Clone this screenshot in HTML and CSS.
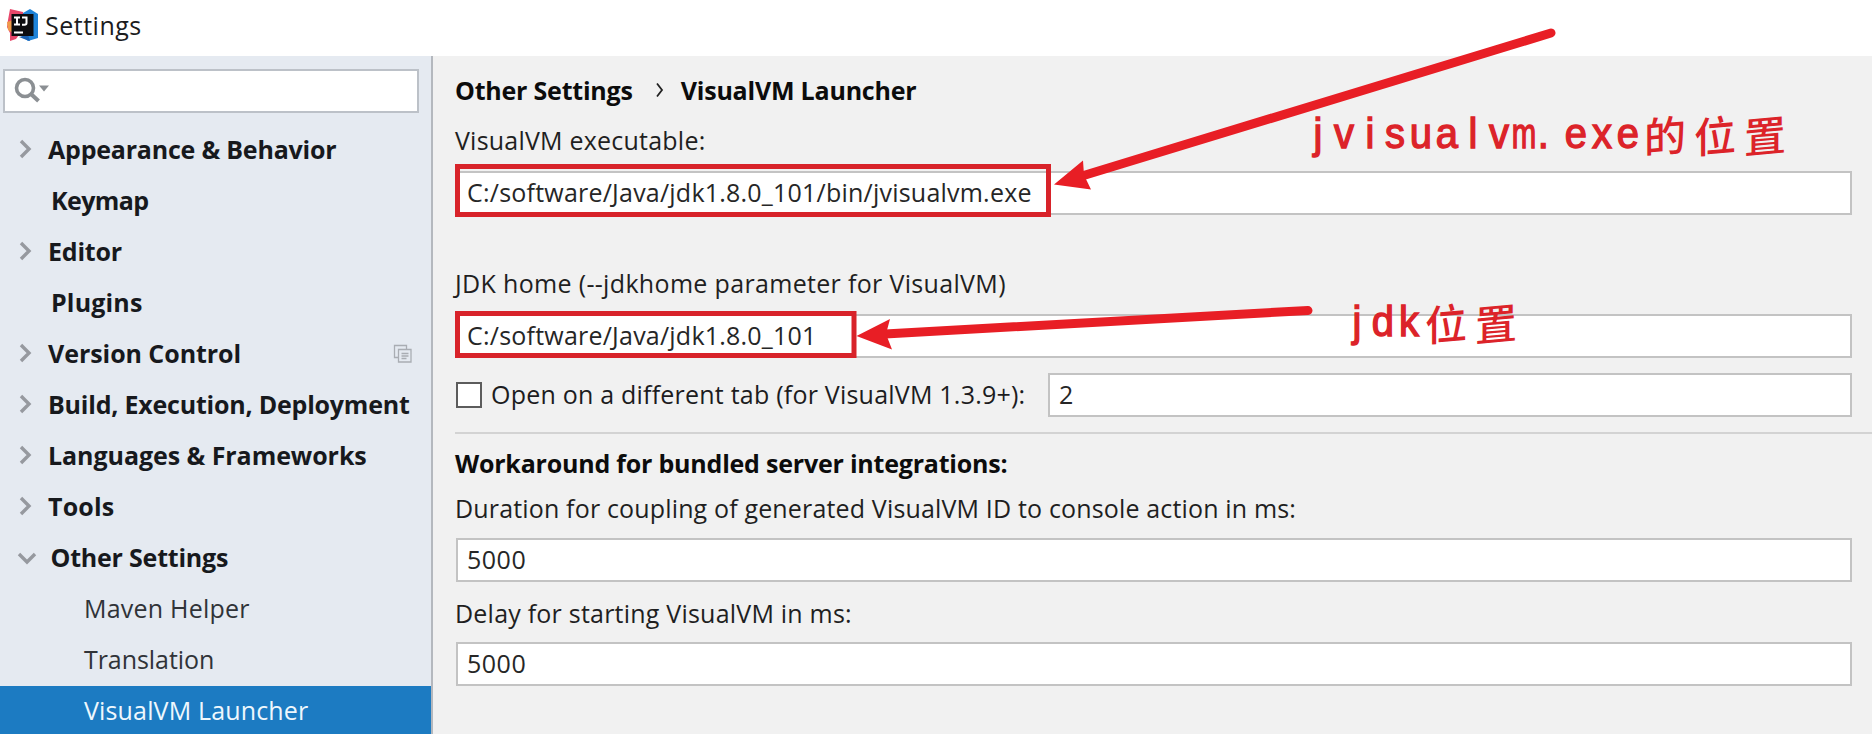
FILE: index.html
```
<!DOCTYPE html>
<html lang="en">
<head>
<meta charset="utf-8">
<title>Settings</title>
<link rel="stylesheet" href="styles.css">
</head>
<body>
<div class="window">
  <header class="titlebar">
    <svg class="logo" width="34" height="34" viewBox="0 0 34 34">
      <path d="M4 1 L17 4 L18 20 L10 31 L4 33 L4 25 L1 19 L2 12 Z" fill="#e8476a"/>
      <path d="M1 14 L7 12 L7 25 L2 22 Z" fill="#f09a4a"/>
      <path d="M17 5 L24 1 L32 6 L32 30 L22 33 L15 28 Z" fill="#1f83d8"/>
      <path d="M13 29 L22 27 L24 33 L18 31 Z" fill="#1b5fb0"/>
      <rect x="5.500" y="6" width="22" height="22" fill="#0d0d10"/>
      <path d="M8 9.500h6M11 9.500v7M8 16.500h6M16 9.500h4.500v5.500q0 1.800-2 1.800h-2.500" fill="none" stroke="#fff" stroke-width="2"/>
      <path d="M8 24.500h9" stroke="#fff" stroke-width="2"/>
    </svg>
    <span class="t loose">Settings</span>
  </header>
  <div class="body">
    <aside class="sidebar">
      <div class="search">
        <svg width="40" height="30" viewBox="0 0 40 30">
          <circle cx="12" cy="12" r="8.500" fill="none" stroke="#8b8f93" stroke-width="3.600"/>
          <path d="M18 18l7.500 7" stroke="#8b8f93" stroke-width="4"/>
          <path d="M26 9.500h10l-5 6z" fill="#8b8f93"/>
        </svg>
      </div>
      <nav class="tree">
        <div class="row"><svg class="chev" viewBox="0 0 18 20"><path d="M4 2l8 8-8 8"/></svg><b class="t tight">Appearance &amp; Behavior</b></div>
        <div class="row leaf"><b class="t tighter">Keymap</b></div>
        <div class="row"><svg class="chev" viewBox="0 0 18 20"><path d="M4 2l8 8-8 8"/></svg><b class="t tight">Editor</b></div>
        <div class="row leaf"><b class="t">Plugins</b></div>
        <div class="row"><svg class="chev" viewBox="0 0 18 20"><path d="M4 2l8 8-8 8"/></svg><b class="t even">Version Control</b>
          <svg class="copy" width="20" height="20" viewBox="0 0 20 20"><path d="M5 13.500H1.500V1.500h12V5M5.500 5.500h12.500v12.500H5.500zM8.500 9.500h7M8.500 12h7M8.500 14.500h5" fill="none" stroke="#a9adb3" stroke-width="1.300"/></svg></div>
        <div class="row"><svg class="chev" viewBox="0 0 18 20"><path d="M4 2l8 8-8 8"/></svg><b class="t tight">Build, Execution, Deployment</b></div>
        <div class="row"><svg class="chev" viewBox="0 0 18 20"><path d="M4 2l8 8-8 8"/></svg><b class="t even">Languages &amp; Frameworks</b></div>
        <div class="row"><svg class="chev" viewBox="0 0 18 20"><path d="M4 2l8 8-8 8"/></svg><b class="t">Tools</b></div>
        <div class="row open"><svg class="chev" viewBox="0 0 20 18"><path d="M2 5l8 8 8-8"/></svg><b class="t tight">Other Settings</b></div>
        <div class="row child"><span class="t wide">Maven Helper</span></div>
        <div class="row child"><span class="t even">Translation</span></div>
        <div class="row child selected"><span class="t">VisualVM Launcher</span></div>
      </nav>
    </aside>
    <main class="panel">
      <div class="crumbs"><b class="t tight">Other Settings</b><svg width="10" height="16" viewBox="0 0 10 16"><path d="M2 1.500l5 6.500-5 6.500" fill="none" stroke="#222" stroke-width="1.800"/></svg><b class="t tight">VisualVM Launcher</b></div>
      <div class="label exe"><span class="t wide">VisualVM executable:</span></div>
      <div class="field"><span class="t wide">C:/software/Java/jdk1.8.0_101/bin/jvisualvm.exe</span></div>
      <div class="label home"><span class="t wider">JDK home (--jdkhome parameter for VisualVM)</span></div>
      <div class="field"><span class="t wide">C:/software/Java/jdk1.8.0_101</span></div>
      <div class="tab-row"><i class="box"></i><span class="tab-label"><span class="t wide">Open on a different tab (for VisualVM 1.3.9+):</span></span><div class="field grow"><span class="t">2</span></div></div>
      <div class="rule"></div>
      <div class="label work"><b class="t tight">Workaround for bundled server integrations:</b></div>
      <div class="label dur"><span class="t">Duration for coupling of generated VisualVM ID to console action in ms:</span></div>
      <div class="field"><span class="t loose">5000</span></div>
      <div class="label delay"><span class="t wide">Delay for starting VisualVM in ms:</span></div>
      <div class="field"><span class="t loose">5000</span></div>
    </main>
  </div>
  <svg class="marks" width="1872" height="734" viewBox="0 0 1872 734">
    <g fill="none" stroke="#d8232a" stroke-width="5">
      <rect x="457.500" y="166.500" width="591" height="48"/>
      <rect x="457.500" y="313.500" width="396.500" height="42"/>
    </g>
    <g stroke="#e81e25" stroke-width="9" stroke-linecap="round">
      <path d="M1551 33L1082 176"/>
      <path d="M1308 310.500L885 334"/>
    </g>
    <path d="M1054 184.500L1083 160.500L1084 175L1091 189.500Z" fill="#e81e25"/>
    <path d="M856.500 336L890 319L886 334L892 349.500Z" fill="#e81e25"/>
  </svg>
  <div class="note note-exe"><i>j</i><i>v</i><i>i</i><i>s</i><i>u</i><i>a</i><i>l</i><i>v</i><i class="m">m</i><i class="dot">.</i><i>e</i><i>x</i><i>e</i><em>的</em><em>位</em><em>置</em></div>
  <div class="note note-jdk"><i>j</i><i>d</i><i>k</i><em>位</em><em>置</em></div>
</div>
</body>
</html>
```
FILE: styles.css
```
* { box-sizing: border-box; }
body { margin: 0; background: #fff; font-family: "Open Sans", "Noto Sans", sans-serif; font-size: 25px; color: #1c1c1e; }
.window { position: relative; width: 1872px; height: 734px; overflow: hidden; display: flex; flex-direction: column; }
.t { white-space: nowrap; display: inline-block; letter-spacing: .16px; }
.tighter { letter-spacing: -.6px; }
.tight { letter-spacing: -.21px; }
.even { letter-spacing: -.06px; }
.wide { letter-spacing: .22px; }
.wider { letter-spacing: .33px; }
.loose { letter-spacing: .5px; }
.titlebar { height: 56px; flex: none; display: flex; align-items: center; padding: 0 0 6px 6px; gap: 5px; }
.body { flex: 1; display: flex; min-height: 0; }
.sidebar { width: 433px; flex: none; background: #e5eaf1; border-right: 2px solid #b4b8be; }
.search { margin: 13px 0 0 3px; width: 416px; height: 44px; border: 2px solid #bcc1c8; background: #fff; display: flex; align-items: center; padding-left: 8px; }
.tree { padding-top: 12px; }
.row { height: 51px; line-height: 49px; display: flex; align-items: flex-start; padding-left: 17px; color: #17191d; }
.chev { width: 18px; height: 20px; margin: 14px 13px 0 0; fill: none; stroke: #96999f; stroke-width: 3.4; }
.open .chev { width: 20px; height: 18px; margin: 16px 13.5px 0 0; }
.leaf { padding-left: 51px; }
.child { padding-left: 84px; color: #303338; }
.copy { margin: 15px 18px 0 auto; }
.selected { background: #1c7bc2; color: #eef7fd; }
.panel { flex: 1; min-width: 0; background: #f1f1f1; padding: 16px 0 0 22px; }
.crumbs, .label { height: 36px; line-height: 36px; display: flex; align-items: center; color: #1f1f1f; }
.crumbs { color: #0c0c0c; }
.crumbs svg { margin: 0 16px 0 22px; }
.exe { margin-top: 14px; margin-bottom: 13px; }
.home { margin-top: 50px; margin-bottom: 13px; }
.field { width: 1396px; height: 44px; line-height: 38px; margin-left: 1px; border: 2px solid #c3c3c3; background: #fff; padding-left: 9px; color: #262626; }
.tab-row { display: flex; align-items: center; margin: 15px 0; width: 1397px; height: 44px; }
.box { width: 26px; height: 26px; border: 2px solid #5c5c5c; background: #fff; margin-left: 1px; }
.tab-label { width: 557px; margin-left: 9px; line-height: 42px; height: 44px; }
.grow { flex: 1; width: auto; margin-left: 0; }
.rule { height: 2px; background: #d3d3d3; }
.work { margin-top: 11px; color: #0c0c0c; }
.dur { margin-top: 9px; margin-bottom: 12px; }
.delay { margin-top: 13px; margin-bottom: 11px; }
.marks { position: absolute; left: 0; top: 0; }
.note { position: absolute; display: flex; color: #dc2329; line-height: 50px; height: 50px; }
.note i { width: 25.8px; display: flex; justify-content: center; font: 42px/50px "Liberation Sans", sans-serif; transform: scaleX(.95); -webkit-text-stroke: 1.4px #dc2329; }
.note i.m { transform: scaleX(.7); }
.note i.dot { justify-content: flex-start; }
.note em { font: 500 42px/50px "Noto Sans CJK SC", sans-serif; width: 50px; text-align: center; transform: skewY(-5deg); }
.note-exe { left: 1305px; top: 109px; }
.note-jdk { left: 1344px; top: 297px; }
```
